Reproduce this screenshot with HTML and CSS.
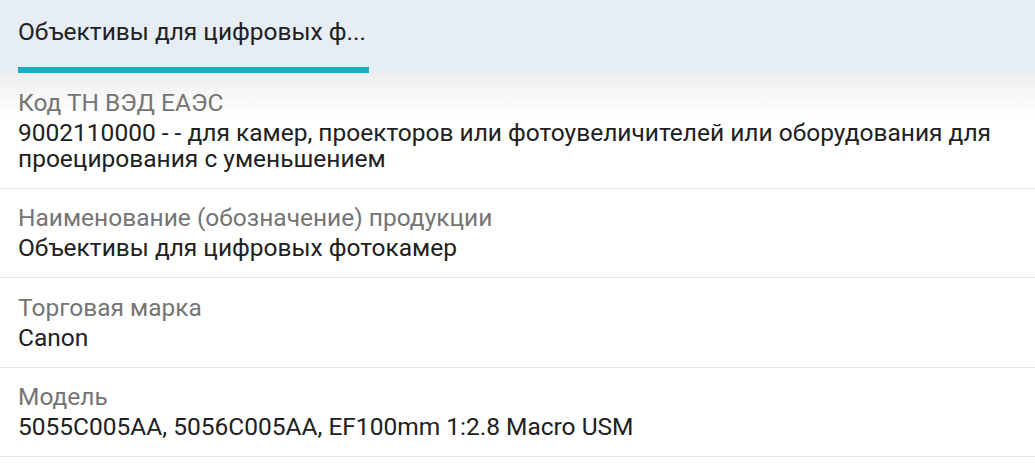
FILE: index.html
```html
<!DOCTYPE html>
<html lang="ru">
<head>
<meta charset="utf-8">
<title>Объективы для цифровых фотокамер</title>
<link rel="stylesheet" href="styles.css">
</head>
<body>
<header class="tabs">
  <div class="tab tab-active">
    <span class="tab-title">Объективы для цифровых ф...</span>
    <span class="tab-bar"></span>
  </div>
</header>
<main class="details">
  <div class="row">
    <div class="label">Код ТН ВЭД ЕАЭС</div>
    <div class="value">9002110000 - - для камер, проекторов или фотоувеличителей или оборудования для проецирования с уменьшением</div>
  </div>
  <div class="row">
    <div class="label">Наименование (обозначение) продукции</div>
    <div class="value">Объективы для цифровых фотокамер</div>
  </div>
  <div class="row">
    <div class="label">Торговая марка</div>
    <div class="value">Canon</div>
  </div>
  <div class="row">
    <div class="label">Модель</div>
    <div class="value">5055C005AA, 5056C005AA, EF100mm 1:2.8 Macro USM</div>
  </div>
</main>
</body>
</html>
```

FILE: styles.css
```css
html, body {
  margin: 0;
  padding: 0;
  background: #ffffff;
}

body {
  font-family: Roboto, "Noto Sans", "Liberation Sans", sans-serif;
  font-size: 24.5px;
  color: #212121;
}

.tabs {
  display: flex;
  height: 73px;
  background: #e6edf5;
  padding-left: 18px;
}

.tab {
  display: flex;
  flex-direction: column;
  min-width: 351px;
  padding-top: 19px;
  box-sizing: border-box;
}

.tab-title {
  display: block;
  line-height: 26px;
  white-space: nowrap;
  color: #212121;
}

.tab-bar {
  display: block;
  margin-top: auto;
  height: 6px;
  background: #1bafc5;
}

.details {
  background: linear-gradient(to bottom, #eeeeee 0, #ffffff 42px) no-repeat;
}

.row {
  padding: 16.5px 18px 16px;
  border-bottom: 1px solid #e6e6e6;
}

.label {
  line-height: 26px;
  color: #757575;
  margin-bottom: 4px;
}

.value {
  line-height: 26px;
  color: #212121;
}
```
